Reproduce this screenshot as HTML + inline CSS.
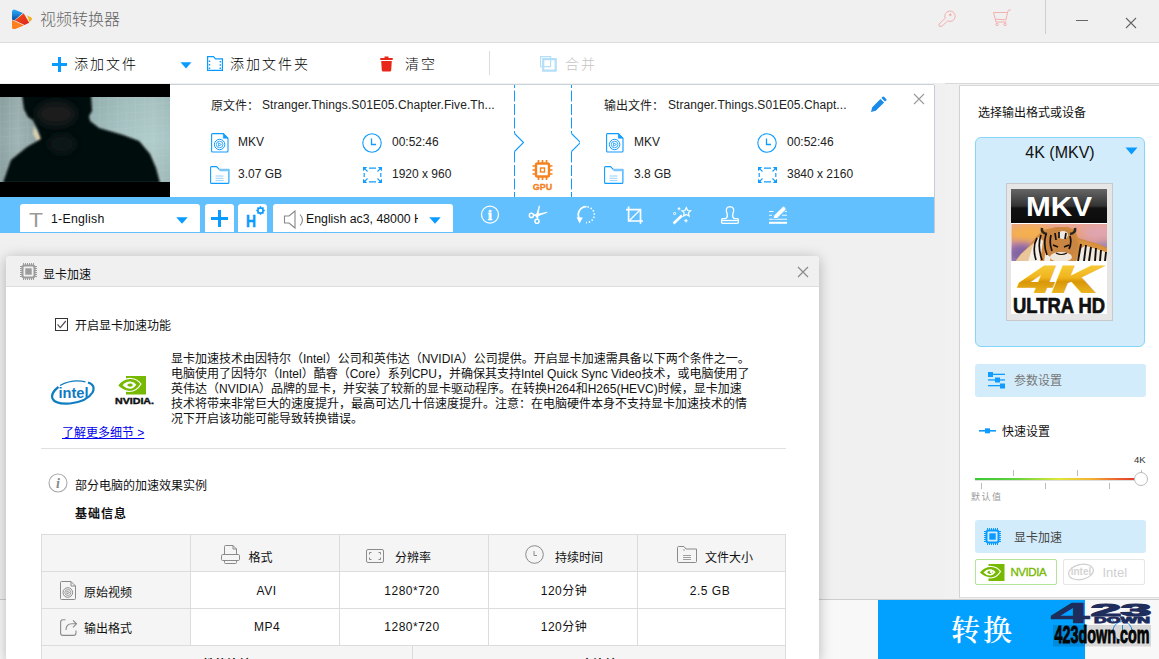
<!DOCTYPE html>
<html lang="zh-CN">
<head>
<meta charset="utf-8">
<title>视频转换器</title>
<style>
*{box-sizing:border-box;margin:0;padding:0}
html,body{width:1159px;height:659px;overflow:hidden;background:#f0f0f0}
body{position:relative;font-family:"Liberation Sans","Noto Sans CJK SC",sans-serif;font-size:12px;color:#222}
.abs{position:absolute}
#titlebar{left:0;top:0;width:1159px;height:43px;background:#f0f0f0;border-bottom:1px solid #dcdcdc}
#toolbar{left:0;top:43px;width:1159px;height:41px;background:#fff;border-bottom:1px solid #f1f1f1}
.tbtxt{position:absolute;top:12px;font-size:14px;font-weight:300;letter-spacing:2px;color:#000;line-height:18px;white-space:nowrap}
#filepanel{left:0;top:85px;width:935px;height:148px;background:#fff;border-right:1px solid #c5ccd3}
#fpline{left:170px;top:84px;width:764px;height:1px;background:#c8d2da}
#tline{left:945px;top:83px;width:214px;height:1px;background:#d8d8d8}
#strip{left:945px;top:84px;width:14px;height:514px;background:#f1f1f1}
#bluebar{left:0;top:197px;width:934px;height:36px;background:#61c0fd}
.wbox{position:absolute;top:7px;height:27.600px;background:#fff;border-radius:3px 3px 0 0}
.ftxt{position:absolute;font-size:12px;line-height:14px;white-space:nowrap;color:#222}
.fn{letter-spacing:.08px}
#rightpanel{left:959px;top:85px;width:200px;height:513px;background:#fff;border-left:1px solid #d2d2d2;border-top:1px solid #d8d8d8;border-bottom:1px solid #dcdcdc}
#dialog{left:6px;top:256px;width:813px;height:405px;background:#fff;border-radius:4px;box-shadow:0 2px 14px rgba(0,0,0,.27)}
#dlgtitle{left:0;top:0;width:813px;height:31px;background:#f0f0f0;border-bottom:1px solid #dedede;border-radius:4px 4px 0 0}
.dt{position:absolute;font-size:12px;line-height:14px;color:#111;white-space:nowrap}
.tc{width:150px;text-align:center;letter-spacing:.5px}
#convert{left:878px;top:600px;width:207px;height:59px;background:#02a0ff}
</style>
</head>
<body>
<div id="titlebar" class="abs">
<svg class="abs" style="left:12px;top:9px" width="20" height="20" viewBox="0 0 20 20">
<defs><linearGradient id="lg1" x1="0" x2="0" y1="0" y2="1"><stop offset="0" stop-color="#2cabf5"/><stop offset=".35" stop-color="#1f8fe0"/><stop offset="1" stop-color="#0a4c96"/></linearGradient>
<linearGradient id="lg2" x1="0" x2="1" y1="0" y2="1"><stop offset="0" stop-color="#f5520f"/><stop offset="1" stop-color="#dc2422"/></linearGradient></defs>
<path d="M0 3Q0 -.2 3 .7L10.900 3.900L2.300 11.500L0 10.500Z" fill="url(#lg1)"/>
<path d="M11.700 4.200L17.200 13.700L12.600 16L2.900 11.600Z" fill="url(#lg2)"/>
<path d="M0 11.100L11.900 16.400L3 20.100Q0 21 0 18Z" fill="#ff7f1e"/>
<path d="M15.100 6.300L19.200 8.600Q20.800 10 19.200 11.500L17.500 13.100Z" fill="#efb023"/>
</svg>
<div class="abs" style="left:40px;top:10px;font-size:16px;line-height:20px;color:#666;white-space:nowrap;font-weight:300">视频转换器</div>
<svg class="abs" style="left:937px;top:9px" width="20" height="18" viewBox="0 0 20 18" fill="none" stroke="#f3abab" stroke-width=".95">
<path d="M8.200 9.300A5.200 5.200 0 1 1 10.700 11.900L4.800 17.300L2.300 17.300L2 15Z"/><circle cx="13.300" cy="5.800" r=".9" fill="#f3b1b1"/></svg>
<svg class="abs" style="left:992px;top:9px" width="20" height="18" viewBox="0 0 20 18" fill="none" stroke="#f3abab" stroke-width=".95">
<path d="M1.500 3.500L15.500 3.500L14 10.800L3.300 10.200ZM3.300 10.200L3.800 13L14.500 13M15.500 3.500L16.300 1.300L18.800 1"/><circle cx="5" cy="15.5" r="1.2"/><circle cx="13" cy="15.5" r="1.2"/></svg>
<div class="abs" style="left:1045px;top:0;width:1px;height:34px;background:#cfcfcf"></div>
<div class="abs" style="left:1076px;top:20px;width:12px;height:1px;background:#666"></div>
<svg class="abs" style="left:1125px;top:17px" width="12" height="12" viewBox="0 0 12 12" stroke="#666" stroke-width="1.1"><path d="M1 1 L11 11 M11 1 L1 11"/></svg>
</div>
<div id="toolbar" class="abs">
<svg class="abs" style="left:52px;top:14px" width="15" height="15" viewBox="0 0 15 15"><path d="M6 0h3v6h6v3h-6v6h-3v-6h-6v-3h6z" fill="#0a9bff"/></svg>
<div class="tbtxt" style="left:74px">添加文件</div>
<svg class="abs" style="left:180px;top:19px" width="12" height="7" viewBox="0 0 12 7"><path d="M0.5 0.3 L11.5 0.3 L6 6.5 Z" fill="#0a9bff"/></svg>
<svg class="abs" style="left:207px;top:13px" width="16" height="15" viewBox="0 0 16 15" fill="none" stroke="#0a9bff" stroke-width="1.2"><path d="M0.6 0.6 L6.5 0.6 L8.5 2.8 L15.4 2.8 L15.4 14.4 L0.6 14.4 Z"/><path d="M2.5 4.5v1.6M2.5 8v1.6M2.5 11.5v1.4M13.3 5v1.6M13.3 8.2v1.6M13.3 11.5v1.4" stroke-width="1.4"/></svg>
<div class="tbtxt" style="left:230px">添加文件夹</div>
<svg class="abs" style="left:380px;top:13px" width="13" height="16" viewBox="0 0 13 16"><path d="M0.3 2h12.4v2h-12.4z M4.5 0.4h4v1.6h-4z M1.2 5h10.6l-0.6 9.3q-0.1 1.3-1.4 1.3h-6.6q-1.3 0-1.4-1.3z" fill="#e8261a"/></svg>
<div class="tbtxt" style="left:405px">清空</div>
<div class="abs" style="left:489px;top:8px;width:1px;height:24px;background:#dcdcdc"></div>
<svg class="abs" style="left:540px;top:13px" width="17" height="16" viewBox="0 0 17 16" fill="none" stroke="#b5def8" stroke-width="1.2"><path d="M0.6 0.6h10v10h-10z"/><path d="M3.2 3.2h12.5v11.5h-12.5z" stroke-width="2.2"/></svg>
<div class="tbtxt" style="left:565px;color:#c4c4c4">合并</div>
</div>
<div id="filepanel" class="abs"><svg class="abs" style="left:0;top:-1px" width="170" height="113" viewBox="0 0 170 113">
<defs><linearGradient id="wl" x1="0" x2="1" y1="0" y2="0"><stop offset="0" stop-color="#90a6a7"/><stop offset=".1" stop-color="#a0b5b5"/><stop offset=".22" stop-color="#8fa5a6"/><stop offset=".55" stop-color="#9cb8b8"/><stop offset=".72" stop-color="#a9c5c5"/><stop offset=".9" stop-color="#b0cccb"/><stop offset="1" stop-color="#a8c4c4"/></linearGradient>
<linearGradient id="wd" x1="0" x2="0" y1="0" y2="1"><stop offset="0" stop-color="#000" stop-opacity=".05"/><stop offset=".5" stop-color="#000" stop-opacity="0"/><stop offset="1" stop-color="#000" stop-opacity=".06"/></linearGradient>
<pattern id="tl" width="9" height="7.500" patternUnits="userSpaceOnUse" patternTransform="skewY(-4)"><path d="M0 .5H9M.5 0V7.500" stroke="#fff" stroke-opacity=".06" stroke-width="1"/></pattern>
<filter id="bl" x="-10%" y="-10%" width="120%" height="120%"><feGaussianBlur stdDeviation="1"/></filter>
<filter id="bl3" x="-30%" y="-30%" width="160%" height="160%"><feGaussianBlur stdDeviation="4"/></filter>
<clipPath id="tc"><rect x="0" y="13" width="170" height="85"/></clipPath></defs>
<rect width="170" height="113" fill="#000"/>
<g clip-path="url(#tc)"><rect x="0" y="13" width="170" height="85" fill="url(#wl)"/><rect x="0" y="13" width="170" height="85" fill="url(#wd)"/><rect x="0" y="0" width="170" height="113" fill="url(#tl)"/>
<path d="M34 42 L42 54 L38 58 L33 50 Z" fill="#d8cfae" filter="url(#bl)"/>
<g filter="url(#bl)"><path d="M22 10 L24 25 L28 33 L33 36 L38 46 L41 55 L27 63 L11 76 L3 99 L160 99 L156 84 L150 70 L139 57 L123 51 L99 44 L90 37 L89 32 L92 27 L91 10 Z" fill="#050707"/></g>
<ellipse cx="56" cy="30" rx="20" ry="12" fill="#1b1f1e" filter="url(#bl3)"/>
<ellipse cx="62" cy="60" rx="14" ry="10" fill="#101413" filter="url(#bl3)"/></g>
</svg>
<div class="ftxt" style="left:211px;top:14px">原文件：</div><div class="ftxt fn" style="left:262px;top:13px">Stranger.Things.S01E05.Chapter.Five.Th...</div>
<svg class="abs" style="left:211px;top:48px" width="18" height="20" viewBox="0 0 18 20" fill="none" stroke="#109cff" stroke-width="1.1"><path d="M.6 1.600Q.6 .6 1.600 .6L12.300 .6L17 5.200L17 18Q17 19 16 19L1.600 19Q.6 19 .6 18Z"/><path d="M12.300 .6L17 5.200L12.300 5.200Z" fill="#109cff" stroke-width=".6"/><circle cx="8.600" cy="11.500" r="5.200" stroke-width="1"/><circle cx="8.600" cy="11.500" r="3.300" stroke-width=".8"/><path d="M7.600 9.800L10.400 11.500L7.600 13.200Z" stroke-width=".8"/></svg><div class="ftxt" style="left:238px;top:50px">MKV</div>
<svg class="abs" style="left:362px;top:48px" width="20" height="20" viewBox="0 0 20 20" fill="none" stroke="#109cff" stroke-width="1.1"><circle cx="10" cy="10" r="9.2"/><path d="M9.5 5.5 L9.5 11.5 L14 11.5" stroke-width="1.3"/></svg><div class="ftxt" style="left:392px;top:50px">00:52:46</div>
<svg class="abs" style="left:210px;top:81px" width="20" height="18" viewBox="0 0 20 18" fill="none" stroke="#109cff" stroke-width="1.1"><path d="M.6 1.600Q.6 .6 1.600 .6L6.500 .6L9.500 3.600L18.900 3.600L18.900 16.400Q18.900 17.400 17.900 17.400L1.600 17.400Q.6 17.400 .6 16.400Z"/><path d="M8.500 2.800L18.900 2.800L18.900 5.300L10 5.300Z" fill="#7cc6fa" stroke="none"/><path d="M5.500 10h8M5.500 12.300h8M5.500 14.600h8" stroke-width=".8" stroke="#7cc6fa"/></svg><div class="ftxt" style="left:238px;top:82px">3.07 GB</div>
<svg class="abs" style="left:363px;top:82px" width="19" height="16" viewBox="0 0 19 16" fill="none" stroke="#109cff" stroke-width="1.200"><path d="M6 1.200h7M6 14.800h7M1.200 6v4M17.800 6v4"/><path d="M0 0h4.200l-4.200 4.200zM19 0v4.200l-4.200-4.200zM0 16v-4.200l4.200 4.200zM19 16h-4.200l4.200-4.200z" fill="#109cff" stroke="none"/><path d="M1.200 1.200l3.300 3.300M17.800 1.200l-3.300 3.300M1.200 14.800l3.300-3.300M17.800 14.800l-3.300-3.300" stroke-width="1.100"/></svg><div class="ftxt" style="left:392px;top:82px">1920 x 960</div>
<svg class="abs" style="left:510px;top:0" width="70" height="113" viewBox="0 0 70 113" fill="none">
<path d="M4.5 0 V48.5 L13.5 57.5 L4.5 66.5 V113" stroke="#fff" stroke-width="3"/>
<path d="M4.5 0 V48.5" stroke="#109cff" stroke-dasharray="11 2.5" stroke-dashoffset="8"/><path d="M4.5 66.5 V113" stroke="#109cff" stroke-dasharray="11 2.5"/><path d="M4.5 48.5 L13.5 57.5 L4.5 66.5" stroke="#109cff" stroke-width="1.1"/>
<path d="M61.5 0 V48.5" stroke="#109cff" stroke-dasharray="11 2.5" stroke-dashoffset="8"/><path d="M61.5 66.5 V113" stroke="#109cff" stroke-dasharray="11 2.5"/><path d="M61.5 48.5 L70.5 57.5 L61.5 66.5" stroke="#109cff" stroke-width="1.1"/>
<g transform="translate(.5 -1)" stroke="#f5821f" stroke-width="1.7"><rect x="25.5" y="79.5" width="13" height="13" rx="1.5" stroke-width="2.4"/><rect x="30" y="84" width="4" height="4" stroke-width="1.4"/><path d="M28 76v3M32 76v3M36 76v3M28 93v3M32 93v3M36 93v3M22 82h3M22 86h3M22 90h3M39 82h3M39 86h3M39 90h3"/></g>
<text x="32.500" y="104.500" text-anchor="middle" font-family="Liberation Sans, sans-serif" font-size="8.500" font-weight="bold" fill="#f5821f" stroke="#f5821f" stroke-width=".3" textLength="19.500" lengthAdjust="spacingAndGlyphs">GPU</text>
</svg>
<div class="ftxt" style="left:604px;top:14px">输出文件：</div><div class="ftxt fn" style="left:668px;top:13px">Stranger.Things.S01E05.Chapt...</div>
<svg class="abs" style="left:870px;top:11px" width="17" height="17" viewBox="0 0 17 17"><path d="M1 16 L2.2 11.2 L10.5 2.9 L14.1 6.5 L5.8 14.8 Z M11.4 2 L12.6 0.8 Q13.3 0.1 14 0.8 L16.2 3 Q16.9 3.7 16.2 4.4 L15 5.6 Z" fill="#1a8be8"/></svg>
<svg class="abs" style="left:913px;top:8px" width="12" height="12" viewBox="0 0 12 12" stroke="#999" stroke-width="1.1"><path d="M1 1 L11 11 M11 1 L1 11"/></svg>
<svg class="abs" style="left:606px;top:48px" width="18" height="20" viewBox="0 0 18 20" fill="none" stroke="#109cff" stroke-width="1.1"><path d="M.6 1.600Q.6 .6 1.600 .6L12.300 .6L17 5.200L17 18Q17 19 16 19L1.600 19Q.6 19 .6 18Z"/><path d="M12.300 .6L17 5.200L12.300 5.200Z" fill="#109cff" stroke-width=".6"/><circle cx="8.600" cy="11.500" r="5.200" stroke-width="1"/><circle cx="8.600" cy="11.500" r="3.300" stroke-width=".8"/><path d="M7.600 9.800L10.400 11.500L7.600 13.200Z" stroke-width=".8"/></svg><div class="ftxt" style="left:634px;top:50px">MKV</div>
<svg class="abs" style="left:757px;top:48px" width="20" height="20" viewBox="0 0 20 20" fill="none" stroke="#109cff" stroke-width="1.1"><circle cx="10" cy="10" r="9.2"/><path d="M9.5 5.5 L9.5 11.5 L14 11.5" stroke-width="1.3"/></svg><div class="ftxt" style="left:787px;top:50px">00:52:46</div>
<svg class="abs" style="left:604px;top:81px" width="20" height="18" viewBox="0 0 20 18" fill="none" stroke="#109cff" stroke-width="1.1"><path d="M.6 1.600Q.6 .6 1.600 .6L6.500 .6L9.500 3.600L18.900 3.600L18.900 16.400Q18.900 17.400 17.900 17.400L1.600 17.400Q.6 17.400 .6 16.400Z"/><path d="M8.500 2.800L18.900 2.800L18.900 5.300L10 5.300Z" fill="#7cc6fa" stroke="none"/><path d="M5.500 10h8M5.500 12.300h8M5.500 14.600h8" stroke-width=".8" stroke="#7cc6fa"/></svg><div class="ftxt" style="left:634px;top:82px">3.8 GB</div>
<svg class="abs" style="left:758px;top:82px" width="19" height="16" viewBox="0 0 19 16" fill="none" stroke="#109cff" stroke-width="1.200"><path d="M6 1.200h7M6 14.800h7M1.200 6v4M17.800 6v4"/><path d="M0 0h4.200l-4.200 4.200zM19 0v4.200l-4.200-4.200zM0 16v-4.200l4.200 4.200zM19 16h-4.200l4.200-4.200z" fill="#109cff" stroke="none"/><path d="M1.200 1.200l3.300 3.300M17.800 1.200l-3.300 3.300M1.200 14.800l3.300-3.300M17.800 14.800l-3.300-3.300" stroke-width="1.100"/></svg><div class="ftxt" style="left:787px;top:82px">3840 x 2160</div>
</div>
<div id="fpline" class="abs"></div><div id="tline" class="abs"></div><div id="strip" class="abs"></div>
<div id="bluebar" class="abs">
<div class="wbox" style="left:20px;width:180px"></div>
<svg class="abs" style="left:28px;top:13px" width="16" height="18" viewBox="0 0 16 18"><text x="8" y="16.800" text-anchor="middle" font-family="Liberation Sans, sans-serif" font-size="21" fill="#9a9a9a" textLength="14" lengthAdjust="spacingAndGlyphs">T</text></svg>
<div class="abs" style="left:51px;top:15px;font-size:12.300px;letter-spacing:.25px;line-height:15px;color:#111;white-space:nowrap">1-English</div>
<svg class="abs" style="left:176px;top:20px" width="12" height="7" viewBox="0 0 12 7"><path d="M0.3 0.3 L11.7 0.3 L6 6.7 Z" fill="#0a9bff"/></svg>
<div class="wbox" style="left:205px;width:29px"></div>
<svg class="abs" style="left:211px;top:13px" width="17" height="17" viewBox="0 0 17 17"><path d="M7 0h3v7h7v3h-7v7h-3v-7h-7v-3h7z" fill="#0a9bff"/></svg>
<div class="wbox" style="left:238px;width:29px"></div>
<svg class="abs" style="left:245px;top:9px" width="20" height="22" viewBox="0 0 20 22"><text x="1" y="21" font-family="Liberation Sans, sans-serif" font-weight="bold" font-size="17" fill="#0a9bff" stroke="#0a9bff" stroke-width=".5" textLength="10" lengthAdjust="spacingAndGlyphs">H</text><g transform="translate(15.500 4.500)" fill="#0a9bff"><circle r="2.600" fill="none" stroke="#0a9bff" stroke-width="1.500"/><path d="M-.8-4.300h1.600v2h-1.600zM-.8 2.300h1.600v2h-1.600zM-4.300-.8h2v1.600h-2zM2.300-.8h2v1.600h-2z"/><path d="M-.8-4.300h1.600v2h-1.600zM-.8 2.300h1.600v2h-1.600z" transform="rotate(45)"/><path d="M-.8-4.300h1.600v2h-1.600zM-.8 2.300h1.600v2h-1.600z" transform="rotate(-45)"/></g></svg>
<div class="wbox" style="left:273px;width:180px"></div>
<svg class="abs" style="left:283px;top:13px" width="22" height="20" viewBox="0 0 22 20" fill="none" stroke="#888" stroke-width="1.100"><path d="M1.500 6h4.500l6-5v17l-6-5h-4.500z"/><path d="M17 4.500q5 5.500 0 11"/></svg>
<div class="abs" style="left:306px;top:15px;width:112px;overflow:hidden;font-size:12.300px;line-height:15px;color:#111;white-space:nowrap">English ac3, 48000 Hz</div>
<svg class="abs" style="left:429px;top:20px" width="12" height="7" viewBox="0 0 12 7"><path d="M0.3 0.3 L11.7 0.3 L6 6.7 Z" fill="#0a9bff"/></svg>

<svg class="abs" style="left:480px;top:7px" width="20" height="22" viewBox="0 0 20 22"><circle cx="10" cy="10.600" r="8.500" fill="none" stroke="#fff" stroke-width="1.300"/><text x="10" y="15.800" text-anchor="middle" font-family="Liberation Serif, serif" font-weight="bold" font-size="15.500" fill="#fff" stroke="#fff" stroke-width=".5">i</text></svg>
<svg class="abs" style="left:527px;top:7px" width="22" height="22" viewBox="0 0 22 22" fill="none" stroke="#fff" stroke-width="1.400"><circle cx="4.400" cy="11.400" r="2.100"/><circle cx="10" cy="17.300" r="2.100"/><path d="M6.400 10.900L20.200 8.300L9.500 12.400Z" fill="#fff" stroke-width=".8"/><path d="M10.600 15.200L12.400 1.800L9.200 11.800Z" fill="#fff" stroke-width=".8"/></svg>
<svg class="abs" style="left:575px;top:7px" width="22" height="22" viewBox="0 0 22 22" fill="none" stroke="#fff"><path d="M11.500 2.700A8 8 0 0 0 4.600 15" stroke-width="1.700"/><path d="M12.500 2.800A8 8 0 0 1 11 18.700" stroke-width="1.700" stroke-dasharray="1.400 1.900"/><path d="M1.600 13.200L7.800 13.600L4.600 19.600Z" fill="#fff" stroke="none"/></svg>
<svg class="abs" style="left:623px;top:7px" width="22" height="22" viewBox="0 0 22 22" fill="none" stroke="#fff" stroke-width="1.700"><path d="M5.600 2.500V17H20M3 5.600H17.500V19.800"/><path d="M17 6L6 17" stroke-width="1.300"/></svg>
<svg class="abs" style="left:671px;top:7px" width="22" height="22" viewBox="0 0 22 22" fill="none" stroke="#fff"><path d="M2.500 19.500L11 11.500" stroke-width="2.600"/><path d="M15.300 3.600l1.300 2.900 3.100.3-2.300 2.100.7 3.100-2.800-1.600-2.800 1.600.7-3.100-2.300-2.100 3.100-.3z" stroke-width="1.200"/><circle cx="3.600" cy="9.500" r="1.100" stroke-width="1"/><path d="M8 3.300v3M6.500 4.800h3M15 15v3.400M13.300 16.700h3.400" stroke-width="1.100"/></svg>
<svg class="abs" style="left:719px;top:7px" width="22" height="22" viewBox="0 0 22 22" fill="none" stroke="#fff" stroke-width="1.300"><path d="M8.300 10.500Q5.300 3 11 2.600Q16.700 3 13.700 10.500Q13.300 13.500 15.500 14.600L18.300 14.600Q19.400 14.600 19.400 15.700L19.400 18.300Q19.400 19.400 18.300 19.400L3.700 19.400Q2.600 19.400 2.600 18.300L2.600 15.700Q2.600 14.600 3.700 14.600L6.500 14.600Q8.700 13.500 8.300 10.500Z"/><path d="M3 16.500h16"/></svg>
<svg class="abs" style="left:767px;top:7px" width="22" height="22" viewBox="0 0 22 22" fill="none" stroke="#fff"><path d="M2 18.800h18" stroke-width="2"/><path d="M2 7.500h4.500M2 11.300h3M2 15.200h18M15 11.300h5M17.500 7.500h2.500" stroke-width="1.100" opacity=".9"/><path d="M5.800 15L7 11.200L15.800 2.500Q16.500 1.900 17.200 2.500L19 4.300Q19.600 5 19 5.700L10.200 14.400Z" fill="#fff" stroke="#61c0fd" stroke-width="1"/></svg>
</div>
<div id="rightpanel" class="abs">
<div class="abs" style="left:18px;top:20px;font-size:12px;line-height:14px;color:#111;white-space:nowrap">选择输出格式或设备</div>
<div class="abs" style="left:15px;top:51px;width:170px;height:210px;background:#d3ecfb;border:1px solid #85d6fa;border-radius:6px"></div>
<div class="abs" style="left:15px;top:57px;width:170px;text-align:center;font-size:16px;line-height:20px;color:#111;white-space:nowrap">4K (MKV)</div>
<svg class="abs" style="left:165px;top:61px" width="13" height="8" viewBox="0 0 13 8"><path d="M0.5 0.5 L12.500 0.5 L6.500 7.500 Z" fill="#0a9bff"/></svg>
<svg class="abs" style="left:46px;top:97px" width="107" height="138" viewBox="0 0 107 138">
<defs>
<linearGradient id="kb" x1="0" x2="0" y1="0" y2="1"><stop offset="0" stop-color="#666"/><stop offset=".5" stop-color="#333"/><stop offset=".56" stop-color="#111"/><stop offset="1" stop-color="#0c0c0c"/></linearGradient>
<linearGradient id="sky" x1="0" x2="0" y1="0" y2="1"><stop offset="0" stop-color="#e9a59a"/><stop offset=".3" stop-color="#eba07a"/><stop offset=".6" stop-color="#cf8fa6"/><stop offset="1" stop-color="#a58abc"/></linearGradient>
<linearGradient id="gold" x1="0" x2="0" y1="0" y2="1"><stop offset="0" stop-color="#f9d548"/><stop offset=".45" stop-color="#f0b41c"/><stop offset=".55" stop-color="#d99708"/><stop offset="1" stop-color="#f4c62e"/></linearGradient>
<filter id="b2"><feGaussianBlur stdDeviation=".55"/></filter><filter id="b3" x="-50%" y="-50%" width="200%" height="200%"><feGaussianBlur stdDeviation="3.500"/></filter>
<clipPath id="tg"><rect x="5.500" y="41" width="95.500" height="37"/></clipPath>
</defs>
<rect x=".5" y=".5" width="106" height="137" fill="#e6e6e6" stroke="#c8c8c8"/>
<rect x="5" y="6" width="96" height="125" fill="#fff"/>
<rect x="5" y="6" width="96" height="34" fill="url(#kb)"/>
<text x="53" y="33" text-anchor="middle" font-family="Liberation Sans, sans-serif" font-weight="bold" font-size="27" fill="#fff" textLength="66" lengthAdjust="spacingAndGlyphs">MKV</text>
<g clip-path="url(#tg)"><rect x="5" y="40" width="96" height="38" fill="url(#sky)"/>
<ellipse cx="24" cy="50" rx="22" ry="9" fill="#f6b24a" opacity=".85" filter="url(#b3)"/>
<ellipse cx="16" cy="70" rx="14" ry="9" fill="#7c5fa3" opacity=".9" filter="url(#b3)"/>
<ellipse cx="92" cy="50" rx="16" ry="7" fill="#dba6c0" opacity=".8" filter="url(#b3)"/>
<ellipse cx="98" cy="66" rx="8" ry="6" fill="#6f84c4" opacity=".7" filter="url(#b3)"/>
<g filter="url(#b2)">
<path d="M9 79L14 72L22 64L30 54L37 47L50 44L62 44L69 47L72 55L82 58L93 61L102 65L102 79Z" fill="#cf8a3f"/>
<path d="M9 79L15 71L24 63L30 58L33 79Z" fill="#e9c79a"/>
<path d="M22 79L27 62L33 54L37 58L34 79Z M38 79L40 66L45 70L44 79Z" fill="#f4efe8"/>
<path d="M70 79L74 66L80 62L88 64L96 66L102 69L102 79Z" fill="#f1ebe2"/>
<path d="M72 57L82 59L93 62L102 66L102 70L90 66L80 63L73 63Z" fill="#d8933f"/>
<ellipse cx="54" cy="61" rx="17" ry="16" fill="#c98542"/>
<ellipse cx="57" cy="52" rx="5" ry="4" fill="#efe9e2"/>
<ellipse cx="55" cy="74" rx="11" ry="5" fill="#efe7dc"/>
<path d="M36 45Q35 50 41 51 M69 45Q70 50 64 51" stroke="#2a2622" stroke-width="2.600" fill="none"/>
<g stroke="#17110c" fill="none" stroke-width="1.700"><path d="M31 55Q26 64 30 77M35 52Q31 63 36 77M40 51Q37 62 41 72M45 52Q43 60 46 68M49 50L50 57M53 49L53 55M60 50L59 56M64 53Q66 60 63 66M47 62L52 64M58 64L63 62"/><path d="M75 61L72 78M80 62L78 78M85 64L83 78M90 65L89 78M95 67L94 78M100 69L99 78" stroke-width="1.900"/><path d="M50 70Q55 73 61 70" stroke-width="1.200"/></g>
</g></g>
<g transform="translate(10 109.300) skewX(-22) scale(1.640 1)"><text x="0" y="0" font-family="Liberation Sans, sans-serif" font-weight="bold" font-size="37" fill="url(#gold)" stroke="url(#gold)" stroke-width="2" stroke-linejoin="miter">4K</text></g>
<text x="53" y="129.800" text-anchor="middle" font-family="Liberation Sans, sans-serif" font-weight="bold" font-size="21.500" fill="#111" stroke="#111" stroke-width=".7" textLength="92" lengthAdjust="spacingAndGlyphs">ULTRA HD</text>
</svg>
<div class="abs" style="left:15px;top:278px;width:171px;height:33px;background:#d3ecfb;border-radius:3px"></div>
<svg class="abs" style="left:27px;top:285px" width="19" height="19" viewBox="0 0 19 19" fill="#109cff"><rect x="1" y="1" width="5" height="5"/><rect x="6" y="2.700" width="12" height="1.300"/><rect x="1" y="8.300" width="17" height="1.300"/><rect x="8" y="6.500" width="5" height="5"/><rect x="1" y="14" width="12" height="1.300"/><rect x="13" y="12.500" width="5" height="5"/></svg>
<div class="abs" style="left:54px;top:288px;font-size:12px;line-height:14px;color:#777;white-space:nowrap">参数设置</div>
<svg class="abs" style="left:19px;top:340px" width="18" height="10" viewBox="0 0 18 10" fill="#109cff"><rect x="0" y="4" width="17" height="1.600"/><rect x="6" y="2.300" width="5" height="5"/></svg>
<div class="abs" style="left:42px;top:339px;font-size:12px;line-height:14px;color:#111;white-space:nowrap">快速设置</div>
<div class="abs" style="left:174px;top:368.500px;font-size:9.500px;line-height:10px;color:#333;white-space:nowrap">4K</div>
<div class="abs" style="left:15px;top:392px;width:161px;height:2px;background:linear-gradient(90deg,#37c837 0%,#5fd23c 25%,#dfe83a 52%,#f2b233 72%,#ea5a2c 90%,#e03a2c 100%)"></div>
<div class="abs" style="left:15px;top:394px;width:161px;height:1px;background:#ddd"></div>
<div class="abs" style="left:53px;top:384px;width:1px;height:6px;background:#bbb"></div>
<div class="abs" style="left:117px;top:384px;width:1px;height:6px;background:#bbb"></div>
<div class="abs" style="left:181px;top:384px;width:1px;height:3px;background:#bbb"></div>
<div class="abs" style="left:21px;top:397px;width:1px;height:6px;background:#bbb"></div>
<div class="abs" style="left:85px;top:397px;width:1px;height:6px;background:#bbb"></div>
<div class="abs" style="left:149px;top:397px;width:1px;height:6px;background:#bbb"></div>
<div class="abs" style="left:174px;top:386px;width:14px;height:14px;border-radius:7px;background:#fff;border:1px solid #bbb"></div>
<div class="abs" style="left:11px;top:406px;font-size:9px;line-height:10px;letter-spacing:1.500px;color:#999;white-space:nowrap">默认值</div>
<div class="abs" style="left:15px;top:434px;width:171px;height:33px;background:#d3ecfb;border-radius:3px"></div>
<svg class="abs" style="left:24px;top:442px" width="17" height="17" viewBox="0 0 17 17" fill="none" stroke="#0a9bff"><rect x="2.500" y="2.500" width="12" height="12" rx="2" stroke-width="2"/><rect x="5.300" y="5.300" width="6.400" height="6.400" fill="#0a9bff" stroke="none"/><path d="M3.5 0v2M3.5 15v2M0 3.5h2M15 3.5h2M5.5 0v2M5.5 15v2M0 5.5h2M15 5.5h2M7.5 0v2M7.5 15v2M0 7.5h2M15 7.5h2M9.5 0v2M9.5 15v2M0 9.5h2M15 9.5h2M11.5 0v2M11.5 15v2M0 11.5h2M15 11.5h2M13.5 0v2M13.5 15v2M0 13.5h2M15 13.5h2" stroke-width="1"/></svg>
<div class="abs" style="left:54px;top:444.500px;font-size:12px;line-height:14px;color:#444;white-space:nowrap">显卡加速</div>
<div class="abs" style="left:15px;top:473px;width:82px;height:26px;background:#fff;border:1px solid #b4e39b;border-radius:2px"></div>
<svg class="abs" style="left:19px;top:477px" width="26" height="18" viewBox="0 0 26 18"><rect x="9.500" y="1" width="16" height="17" fill="#76b900"/><path d="M0 9.500 Q5.500 3 12.500 3.500 Q18.500 4 21.500 8.500 Q17.500 15 11.500 15 Q4.500 14.500 0 9.500 Z" fill="#76b900" stroke="#fff" stroke-width="1.200"/><path d="M4.500 9.500 Q7.500 6 11.500 6.300 Q15 6.800 16.500 9 Q14 12.500 11 12.500 Q7 12.300 4.500 9.500 Z" fill="#fff"/><path d="M8 9.300 Q9.800 7.600 12 7.900 Q13.800 8.300 13.800 9.500 Q12.500 11.300 11 11.100 Q9.200 10.800 8 9.300 Z" fill="#76b900"/><path d="M10.500 9 L13 6 L13 11 Z" fill="#fff"/></svg>
<div class="abs" style="left:50.500px;top:479px;font-size:11.500px;letter-spacing:-.45px;line-height:14px;color:#76b900;white-space:nowrap;-webkit-text-stroke:.3px #76b900">NVIDIA</div>
<div class="abs" style="left:103px;top:473px;width:82px;height:26px;background:#fff;border:1px solid #e6e6e6;border-radius:2px"></div>
<svg class="abs" style="left:107px;top:476px" width="28" height="20" viewBox="0 0 28 20" fill="none" stroke="#cfcfcf"><ellipse cx="14" cy="10" rx="12.500" ry="7.500" transform="rotate(-12 14 10)" stroke-width="1.200"/><text x="14" y="13" text-anchor="middle" font-family="Liberation Sans, sans-serif" font-size="10" font-weight="bold" fill="#d4d4d4" stroke="none">intel</text></svg>
<div class="abs" style="left:142.500px;top:478.500px;font-size:13px;line-height:15px;color:#cfcfcf;white-space:nowrap">Intel</div>
</div>
<div id="bottombar" class="abs" style="left:0;top:599px;width:1159px;height:60px;background:#f8f8f8;border-top:1px solid #cdcdcd"></div>
<div id="convert" class="abs"><div class="abs" style="left:73px;top:13px;font-family:'Liberation Serif','Noto Serif CJK SC',serif;font-weight:600;font-size:29px;line-height:36px;letter-spacing:3px;color:#fff;white-space:nowrap">转换</div></div>
<svg id="wm" class="abs" style="left:1045px;top:598px" width="114" height="61" viewBox="0 0 114 61">
<g fill="none" stroke="#2a9bf0" stroke-width="1"><circle cx="77.500" cy="33" r="9.500"/><path d="M69 24 Q66 21 69.500 19 M86 24 Q89 21 85.500 19 M77.500 27v6l4 3"/></g>
<rect x="8" y="27" width="98" height="21.500" fill="#000" opacity=".13"/>
<g fill="#1f2d5c"><text transform="translate(5.500 25.300) scale(2.480 1)" font-family="Liberation Sans, sans-serif" font-weight="bold" font-size="28.600" stroke="#1f2d5c" stroke-width=".5">4</text>
<text x="46" y="17.500" font-family="Liberation Sans, sans-serif" font-weight="bold" font-size="16.500" textLength="60" lengthAdjust="spacingAndGlyphs" stroke="#1f2d5c" stroke-width="1.200">23</text>
<text x="49" y="25.300" font-family="Liberation Sans, sans-serif" font-weight="bold" font-size="8.500" textLength="56" lengthAdjust="spacingAndGlyphs" stroke="#1f2d5c" stroke-width=".8">DOWN</text></g>
<text x="9.500" y="44.800" font-family="Liberation Sans, sans-serif" font-weight="bold" font-size="23.500" fill="#050505" stroke="#050505" stroke-width=".9" textLength="95" lengthAdjust="spacingAndGlyphs">423down.com</text>
</svg>
<div id="dialog" class="abs"><div id="dlgtitle" class="abs"></div>
<svg class="abs" style="left:14px;top:7px" width="17" height="17" viewBox="0 0 17 17" fill="none" stroke="#9c9c9c"><rect x="2.500" y="2.500" width="12" height="12" rx="2" stroke-width="2"/><rect x="5.300" y="5.300" width="6.400" height="6.400" fill="#9c9c9c" stroke="none"/><path d="M3.5 0v2M3.5 15v2M0 3.5h2M15 3.5h2M5.5 0v2M5.5 15v2M0 5.5h2M15 5.5h2M7.5 0v2M7.5 15v2M0 7.5h2M15 7.5h2M9.5 0v2M9.5 15v2M0 9.5h2M15 9.5h2M11.5 0v2M11.5 15v2M0 11.5h2M15 11.5h2M13.5 0v2M13.5 15v2M0 13.5h2M15 13.5h2" stroke-width="1"/></svg>
<div class="dt" style="left:37px;top:12px">显卡加速</div>
<svg class="abs" style="left:791px;top:10px" width="12" height="12" viewBox="0 0 12 12" stroke="#8a8a8a" stroke-width="1.200"><path d="M1 1L11 11M11 1L1 11"/></svg>
<div class="abs" style="left:49px;top:62px;width:13px;height:13px;border:1px solid #333;background:#fff"></div>
<svg class="abs" style="left:49px;top:62px" width="13" height="13" viewBox="0 0 13 13" fill="none" stroke="#505050" stroke-width="1.200"><path d="M2.500 6.300L5.300 9.600L10.800 3"/></svg>
<div class="dt" style="left:69px;top:63px">开启显卡加速功能</div>
<div class="dt" style="left:165px;top:95.5px">显卡加速技术由因特尔（Intel）公司和英伟达（NVIDIA）公司提供。开启显卡加速需具备以下两个条件之一。</div><div class="dt" style="left:165px;top:110.6px">电脑使用了因特尔（Intel）酷睿（Core）系列CPU，并确保其支持Intel Quick Sync Video技术，或电脑使用了</div><div class="dt" style="left:165px;top:125.7px">英伟达（NVIDIA）品牌的显卡，并安装了较新的显卡驱动程序。在转换H264和H265(HEVC)时候，显卡加速</div><div class="dt" style="left:165px;top:140.8px">技术将带来非常巨大的速度提升，最高可达几十倍速度提升。注意：在电脑硬件本身不支持显卡加速技术的情</div><div class="dt" style="left:165px;top:155.9px">况下开启该功能可能导致转换错误。</div>
<svg class="abs" style="left:44px;top:122px" width="46" height="28" viewBox="0 0 46 28" fill="none"><path d="M38 4.500Q46 7 42.500 14.500Q37 23.500 20 25.500Q5 26.500 2.500 20.500Q.5 15 8.500 9" stroke="#0f7dc2" stroke-width="2.200"/><path d="M10 7.500Q22 1 35.500 3.800" stroke="#0f7dc2" stroke-width="1.300"/><text x="8.500" y="19.500" font-family="Liberation Sans, sans-serif" font-weight="bold" font-size="14.500" fill="#0f7dc2" textLength="30" lengthAdjust="spacingAndGlyphs">intel</text></svg>
<svg class="abs" style="left:108px;top:119px" width="42" height="31" viewBox="0 0 42 31"><rect x="12" y="1" width="20" height="18.500" fill="#76b900"/><path d="M3.500 10.500Q9 3 17 3.500Q23.500 4 27 9Q22.500 16.500 15.500 16.500Q8 16 3.500 10.500Z" fill="#76b900" stroke="#fff" stroke-width="1.200"/><path d="M8.500 10.300Q12 6.300 16.500 6.600Q20.500 7.200 22.300 9.700Q19.500 13.800 16 13.800Q11.500 13.500 8.500 10.300Z" fill="#fff"/><path d="M13 10Q14.800 8.300 17 8.600Q18.800 9 18.800 10.200Q17.500 12 16 11.800Q14.200 11.600 13 10Z" fill="#76b900"/><text x="1" y="29.200" font-family="Liberation Sans, sans-serif" font-weight="bold" font-size="9" fill="#111" stroke="#111" stroke-width=".4" textLength="39" lengthAdjust="spacingAndGlyphs">NVIDIA.</text></svg>
<div class="dt" style="left:56px;top:170px;color:#0000ee;text-decoration:underline">了解更多细节 &gt;</div>
<div class="abs" style="left:35px;top:192px;width:745px;height:1px;background:#e0e0e0"></div>
<svg class="abs" style="left:42px;top:217px" width="20" height="20" viewBox="0 0 20 20"><circle cx="10" cy="10" r="9" fill="none" stroke="#aaa" stroke-width="1.100"/><text x="10" y="15" text-anchor="middle" font-family="Liberation Serif, serif" font-style="italic" font-weight="bold" font-size="14" fill="#888">i</text></svg>
<div class="dt" style="left:69px;top:223px">部分电脑的加速效果实例</div>
<div class="dt" style="left:69px;top:250.5px;font-weight:bold;letter-spacing:1px">基础信息</div>
<div class="abs" style="left:35px;top:278px;width:150px;height:38px;background:#f5f5f5;border:1px solid #dcdcdc"></div><div class="abs" style="left:184px;top:278px;width:150px;height:38px;background:#f5f5f5;border:1px solid #dcdcdc"></div><div class="abs" style="left:333px;top:278px;width:150px;height:38px;background:#f5f5f5;border:1px solid #dcdcdc"></div><div class="abs" style="left:482px;top:278px;width:150px;height:38px;background:#f5f5f5;border:1px solid #dcdcdc"></div><div class="abs" style="left:631px;top:278px;width:149px;height:38px;background:#f5f5f5;border:1px solid #dcdcdc"></div><div class="abs" style="left:35px;top:315px;width:150px;height:38px;background:#f5f5f5;border:1px solid #dcdcdc"></div><div class="abs" style="left:184px;top:315px;width:150px;height:38px;background:#fff;border:1px solid #dcdcdc"></div><div class="abs" style="left:333px;top:315px;width:150px;height:38px;background:#fff;border:1px solid #dcdcdc"></div><div class="abs" style="left:482px;top:315px;width:150px;height:38px;background:#fff;border:1px solid #dcdcdc"></div><div class="abs" style="left:631px;top:315px;width:149px;height:38px;background:#fff;border:1px solid #dcdcdc"></div><div class="abs" style="left:35px;top:352px;width:150px;height:38px;background:#f5f5f5;border:1px solid #dcdcdc"></div><div class="abs" style="left:184px;top:352px;width:150px;height:38px;background:#fff;border:1px solid #dcdcdc"></div><div class="abs" style="left:333px;top:352px;width:150px;height:38px;background:#fff;border:1px solid #dcdcdc"></div><div class="abs" style="left:482px;top:352px;width:150px;height:38px;background:#fff;border:1px solid #dcdcdc"></div><div class="abs" style="left:631px;top:352px;width:149px;height:38px;background:#fff;border:1px solid #dcdcdc"></div><div class="abs" style="left:35px;top:389px;width:372px;height:40px;background:#f5f5f5;border:1px solid #dcdcdc"></div><div class="abs" style="left:406px;top:389px;width:374px;height:40px;background:#f5f5f5;border:1px solid #dcdcdc"></div>
<svg class="abs" style="left:215px;top:289px" width="19" height="19" viewBox="0 0 19 19" fill="none" stroke="#8a8a8a" stroke-width="1"><path d="M3.500 9.500V1.500Q3.500.5 4.500.5H12L15.500 4V9.500"/><path d="M12 .5V4H15.500"/><rect x=".5" y="9.500" width="18" height="6" rx="1.200"/><path d="M3.500 15.500V17.500Q3.500 18.500 4.500 18.500H14.500Q15.500 18.500 15.500 17.500V15.500"/></svg>
<svg class="abs" style="left:360px;top:293px" width="18" height="14" viewBox="0 0 18 14" fill="none" stroke="#8a8a8a" stroke-width="1"><rect x=".5" y=".5" width="17" height="13" rx="1.500"/><path d="M3.500 5.500V3.500H5.500M12.500 3.500H14.500V5.500M14.500 8.500V10.500H12.500M5.500 10.500H3.500V8.500"/></svg>
<svg class="abs" style="left:519px;top:289px" width="19" height="19" viewBox="0 0 19 19" fill="none" stroke="#8a8a8a" stroke-width="1"><circle cx="9.500" cy="9.500" r="8.800"/><path d="M9 6V10.500H12"/></svg>
<svg class="abs" style="left:671px;top:290px" width="20" height="17" viewBox="0 0 20 17" fill="none" stroke="#8a8a8a" stroke-width="1"><path d="M.5 1.500Q.5.5 1.500.5H7L9 3H19.500V15.500Q19.500 16.500 18.500 16.500H1.500Q.5 16.500.5 15.500Z"/><path d="M7 3V5M6 9.500H14M6 11.500H14M6 13.500H14" stroke-width=".8"/></svg>
<svg class="abs" style="left:54px;top:325px" width="16" height="19" viewBox="0 0 16 19" fill="none" stroke="#8a8a8a" stroke-width="1"><path d="M.5 1.500Q.5.5 1.500.5H11L15.500 5V17.500Q15.500 18.500 14.500 18.500H1.500Q.5 18.500.5 17.500Z"/><path d="M11 .5V5H15.500"/><circle cx="7.800" cy="11.500" r="4.800"/><circle cx="7.800" cy="11.500" r="3" stroke-width=".8"/><path d="M6.900 9.900L9.600 11.500L6.900 13.100Z" stroke-width=".8"/></svg>
<svg class="abs" style="left:54px;top:362px" width="18" height="18" viewBox="0 0 18 18" fill="none" stroke="#8a8a8a" stroke-width="1.100"><path d="M5.500 1.800H3Q.6 1.800.6 4.300V15Q.6 17.400 3 17.400H13.500Q16 17.400 16 15V12.500"/><path d="M6 12Q6 5.800 12 5.800H16.500M13 2.300L16.500 5.800L13 9.300"/></svg>

<div class="dt" style="left:242.5px;top:295px">格式</div>
<div class="dt" style="left:389px;top:295px">分辨率</div>
<div class="dt" style="left:549px;top:295px">持续时间</div>
<div class="dt" style="left:699px;top:295px">文件大小</div>
<div class="dt" style="left:78px;top:330px">原始视频</div>
<div class="dt" style="left:78px;top:365.5px">输出格式</div>
<div class="dt tc" style="left:185.5px;top:328.3px">AVI</div><div class="dt tc" style="left:331px;top:328.3px">1280*720</div><div class="dt tc" style="left:483px;top:328.3px">120分钟</div><div class="dt tc" style="left:629px;top:328.3px">2.5 GB</div>
<div class="dt tc" style="left:186px;top:364.3px">MP4</div><div class="dt tc" style="left:331px;top:364.3px">1280*720</div><div class="dt tc" style="left:483px;top:364.3px">120分钟</div>
<div class="dt" style="left:35px;top:401.5px;width:372px;text-align:center;font-weight:bold">性能比较</div>
<div class="dt" style="left:406px;top:401.5px;width:374px;text-align:center;font-weight:bold">高比较</div>
</div>
</body>
</html>
